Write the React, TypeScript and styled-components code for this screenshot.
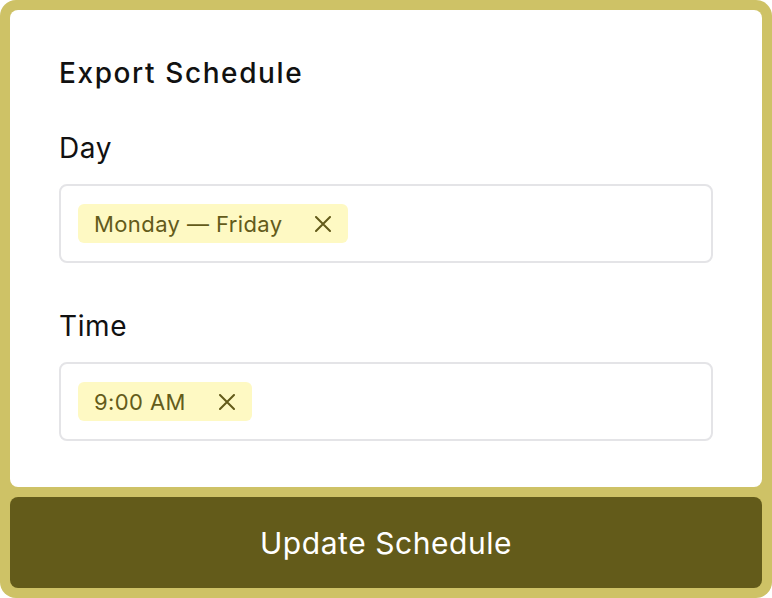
import React from "react";
import styled, { createGlobalStyle } from "styled-components";

const GlobalStyle = createGlobalStyle`
  html, body {
    margin: 0;
    padding: 0;
    background: #ffffff;
  }
  * { box-sizing: border-box; }
`;

const Frame = styled.div`
  width: 772px;
  height: 598px;
  background: #cec266;
  border-radius: 16px;
  padding: 10px;
  display: flex;
  flex-direction: column;
  gap: 10px;
  font-family: Inter, "Noto Sans", sans-serif;
`;

const Panel = styled.div`
  flex: 1;
  background: #ffffff;
  border-radius: 8px;
  padding: 46px 49px 0 49px;
  display: flex;
  flex-direction: column;
`;

const Title = styled.h1`
  margin: 0 0 41px 0;
  font-size: 28px;
  line-height: 34px;
  font-weight: 500;
  letter-spacing: 1.6px;
  color: #111111;
`;

const Field = styled.div`
  display: flex;
  flex-direction: column;
  gap: 19px;
  margin-bottom: 46px;
`;

const Label = styled.div`
  font-size: 28px;
  line-height: 34px;
  font-weight: 400;
  letter-spacing: 0.6px;
  color: #111111;
`;

const InputBox = styled.div`
  width: 654px;
  height: 79px;
  border: 2px solid #e4e4e7;
  border-radius: 8px;
  padding: 0 17px;
  display: flex;
  align-items: center;
`;

const Chip = styled.div`
  height: 39px;
  background: #fef9c3;
  border-radius: 6px;
  padding: 0 17px 0 16px;
  display: flex;
  align-items: center;
  gap: 33px;
  color: #635b1a;
  font-size: 22px;
  font-weight: 400;
  letter-spacing: 0.4px;
`;

const Remove = styled.span`
  display: flex;
  align-items: center;
  color: #635b1a;
`;

const Button = styled.button`
  height: 92px;
  border: none;
  border-radius: 8px;
  background: #635b1a;
  color: #ffffff;
  font-family: Inter, "Noto Sans", sans-serif;
  font-size: 30px;
  font-weight: 400;
  letter-spacing: 0.55px;
  display: flex;
  align-items: center;
  justify-content: center;
  cursor: pointer;
`;

const XIcon = () => (
  <svg width="16" height="16" viewBox="0 0 16 16" fill="none" stroke="currentColor" strokeWidth="2" strokeLinecap="round">
    <path d="M1 1 L15 15 M15 1 L1 15" />
  </svg>
);

export default function App() {
  return (
    <>
      <GlobalStyle />
      <Frame>
        <Panel>
          <Title>Export Schedule</Title>
          <Field>
            <Label>Day</Label>
            <InputBox>
              <Chip>
                Monday — Friday
                <Remove><XIcon /></Remove>
              </Chip>
            </InputBox>
          </Field>
          <Field>
            <Label>Time</Label>
            <InputBox>
              <Chip>
                9:00 AM
                <Remove><XIcon /></Remove>
              </Chip>
            </InputBox>
          </Field>
        </Panel>
        <Button>Update Schedule</Button>
      </Frame>
    </>
  );
}
